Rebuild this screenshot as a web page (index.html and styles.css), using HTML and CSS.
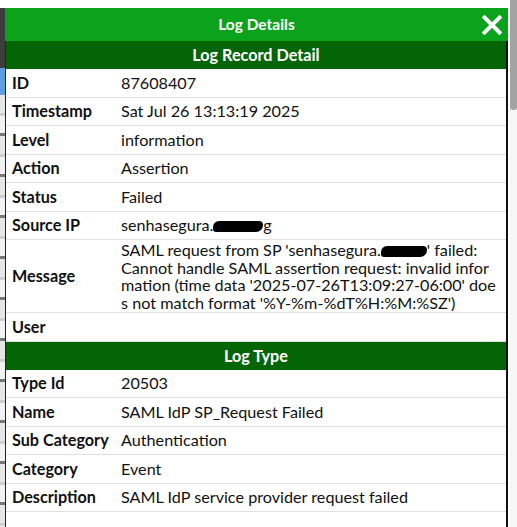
FILE: index.html
```html
<!DOCTYPE html>
<html>
<head>
<meta charset="utf-8">
<link rel="stylesheet" href="styles.css">
</head>
<body>
<div class="page">
  <div class="behind">
    <div class="strip s-white"></div>
    <div class="strip s-dark"></div>
    <div class="strip s-blue"></div>
    <div class="strip s-light"></div>
  </div>
  <div class="scroll"><div class="thumb"></div></div>
</div>
<div class="modal">
  <div class="title">Log Details
    <svg class="close" width="20" height="20" viewBox="0 0 20 20"><path d="M2.5 2.5 L17.5 17.5 M17.5 2.5 L2.5 17.5" stroke="#fff" stroke-width="4" stroke-linecap="square" fill="none"/></svg>
  </div>
  <table class="grid">
    <tr><th colspan="2" class="sect">Log Record Detail</th></tr>
    <tr><td class="k">ID</td><td class="v">87608407</td></tr>
    <tr><td class="k">Timestamp</td><td class="v">Sat Jul 26 13:13:19 2025</td></tr>
    <tr><td class="k">Level</td><td class="v">information</td></tr>
    <tr><td class="k">Action</td><td class="v">Assertion</td></tr>
    <tr><td class="k">Status</td><td class="v">Failed</td></tr>
    <tr><td class="k">Source IP</td><td class="v">senhasegura.<span class="redact r1"></span>g</td></tr>
    <tr><td class="k">Message</td><td class="v msg"><div class="ln">SAML request from SP 'senhasegura.<span class="redact r2"></span>' failed:</div><div class="ln">Cannot handle SAML assertion request: invalid infor</div><div class="ln">mation (time data '2025-07-26T13:09:27-06:00' doe</div><div class="ln">s not match format '%Y-%m-%dT%H:%M:%SZ')</div></td></tr>
    <tr><td class="k">User</td><td class="v"></td></tr>
    <tr><th colspan="2" class="sect">Log Type</th></tr>
    <tr><td class="k">Type Id</td><td class="v">20503</td></tr>
    <tr><td class="k">Name</td><td class="v">SAML IdP SP_Request Failed</td></tr>
    <tr><td class="k">Sub Category</td><td class="v">Authentication</td></tr>
    <tr><td class="k">Category</td><td class="v">Event</td></tr>
    <tr><td class="k">Description</td><td class="v">SAML IdP service provider request failed</td></tr>
  </table>
</div>
</body>
</html>
```
FILE: styles.css
```css
html, body {
  margin: 0;
  padding: 0;
  background: #fff;
  overflow: hidden;
  font-family: Lato, "Open Sans", sans-serif;
}
.page {
  display: flex;
  justify-content: space-between;
  height: 527px;
}
.behind {
  width: 5px;
  display: flex;
  flex-direction: column;
}
.s-white { height: 8px; background: #fff; }
.s-dark { height: 60px; background: #3d3d3d; }
.s-blue { height: 27px; background: #5d9ee0; }
.s-light { flex: 1; background: repeating-linear-gradient(#e6e6e6 0 18px, #cfcfcf 18px 21px, #f2f2f2 21px 38px, #777 38px 41px); }
.scroll {
  width: 7px;
  background: #f6f6f6;
}
.thumb {
  height: 110px;
  background: #a3a3a3;
  border-radius: 0 0 3px 3px;
}
.modal {
  position: absolute;
  left: 5px;
  top: 8px;
  width: 500px;
  height: 530px;
  background: #fff;
  border-left: 1px solid #222;
  border-right: 2px solid #111;
  color: #111;
}
.title {
  position: relative;
  height: 33px;
  line-height: 33px;
  background: #0ba21c;
  color: #fff;
  font-weight: bold;
  font-size: 15.5px;
  text-align: center;
  margin-left: -1px;
  margin-right: -2px;
}
.close {
  position: absolute;
  right: 6px;
  top: 7px;
}
.grid {
  width: 100%;
  border-collapse: collapse;
  font-size: 16.2px;
}
.sect {
  background: #046505;
  color: #fff;
  font-weight: bold;
  font-size: 16.2px;
  height: 28px;
  padding: 0;
  line-height: 28px;
  text-align: center;
}
td {
  border-bottom: 1px solid #e0e0e0;
  padding: 4.75px 4px;
  line-height: 18px;
  vertical-align: middle;
}
.k {
  width: 101px;
  padding-left: 6px;
  font-weight: bold;
  white-space: nowrap;
}
.v {
  padding-left: 4px;
}
.msg {
  padding-top: 1px;
  padding-bottom: 1px;
  white-space: nowrap;
}
.ln {
  line-height: 17.5px;
}
.redact {
  display: inline-block;
  background: #000;
  height: 11px;
  border-radius: 6px 4px 7px 3px;
  vertical-align: -1px;
}
.r1 { width: 50px; }
.r2 { width: 46px; }
```
